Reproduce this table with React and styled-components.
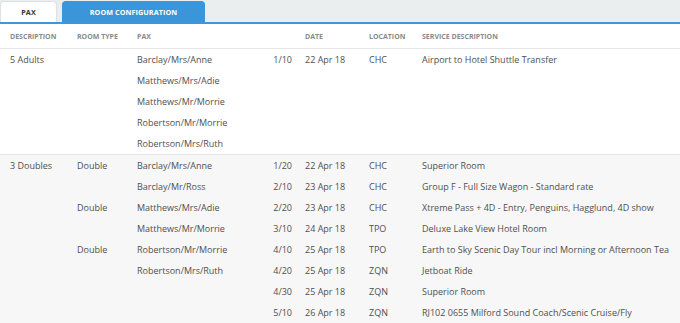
import React from "react";
import styled, { createGlobalStyle } from "styled-components";

const groups = [
  {
    rows: [
      { desc: "5 Adults", pax: "Barclay/Mrs/Anne", num: "1/10", date: "22 Apr 18", loc: "CHC", service: "Airport to Hotel Shuttle Transfer" },
      { pax: "Matthews/Mrs/Adie" },
      { pax: "Matthews/Mr/Morrie" },
      { pax: "Robertson/Mr/Morrie" },
      { pax: "Robertson/Mrs/Ruth" },
    ],
  },
  {
    shaded: true,
    rows: [
      { desc: "3 Doubles", type: "Double", pax: "Barclay/Mrs/Anne", num: "1/20", date: "22 Apr 18", loc: "CHC", service: "Superior Room" },
      { pax: "Barclay/Mr/Ross", num: "2/10", date: "23 Apr 18", loc: "CHC", service: "Group F - Full Size Wagon - Standard rate" },
      { type: "Double", pax: "Matthews/Mrs/Adie", num: "2/20", date: "23 Apr 18", loc: "CHC", service: "Xtreme Pass + 4D - Entry, Penguins, Hagglund, 4D show" },
      { pax: "Matthews/Mr/Morrie", num: "3/10", date: "24 Apr 18", loc: "TPO", service: "Deluxe Lake View Hotel Room" },
      { type: "Double", pax: "Robertson/Mr/Morrie", num: "4/10", date: "25 Apr 18", loc: "TPO", service: "Earth to Sky Scenic Day Tour incl Morning or Afternoon Tea" },
      { pax: "Robertson/Mrs/Ruth", num: "4/20", date: "25 Apr 18", loc: "ZQN", service: "Jetboat Ride" },
      { num: "4/30", date: "25 Apr 18", loc: "ZQN", service: "Superior Room" },
      { num: "5/10", date: "26 Apr 18", loc: "ZQN", service: "RJ102 0655 Milford Sound Coach/Scenic Cruise/Fly" },
    ],
  },
];

function App() {
  return (
    <>
      <GlobalStyle />
      <Page>
        <TabBar>
          <Tab>PAX</Tab>
          <Tab active>ROOM CONFIGURATION</Tab>
        </TabBar>
        <HeaderRow>
          <span>DESCRIPTION</span>
          <span>ROOM TYPE</span>
          <span>PAX</span>
          <span />
          <DateCell>DATE</DateCell>
          <span>LOCATION</span>
          <span>SERVICE DESCRIPTION</span>
        </HeaderRow>
        {groups.map((group, gi) => (
          <Group key={gi} shaded={group.shaded}>
            {group.rows.map((row, ri) => (
              <Row key={ri}>
                <span>{row.desc}</span>
                <span>{row.type}</span>
                <span>{row.pax}</span>
                <NumCell>{row.num}</NumCell>
                <DateCell>{row.date}</DateCell>
                <span>{row.loc}</span>
                <span>{row.service}</span>
              </Row>
            ))}
          </Group>
        ))}
      </Page>
    </>
  );
}

const GlobalStyle = createGlobalStyle`
  body {
    margin: 0;
    background: #f0f1f2;
    font-family: "Open Sans", "Noto Sans", sans-serif;
  }
`;

const Page = styled.div`
  width: 680px;
  height: 323px;
  overflow: hidden;
  background: #f0f1f2;
`;

const TabBar = styled.div`
  display: flex;
  align-items: flex-end;
  gap: 5px;
  height: 21px;
  padding-top: 1px;
  background: #ebeeef;
  border-bottom: 2px solid #3d97da;
`;

const Tab = styled.div`
  height: 100%;
  box-sizing: border-box;
  display: flex;
  align-items: center;
  justify-content: center;
  width: ${(p) => (p.active ? "143px" : "57px")};
  border-radius: 4px 4px 0 0;
  font-size: 7.2px;
  font-weight: 700;
  letter-spacing: 0.1px;
  color: ${(p) => (p.active ? "#ffffff" : "#333")};
  background: ${(p) => (p.active ? "#3a95d9" : "#ffffff")};
  border: 1px solid ${(p) => (p.active ? "#3a95d9" : "#dde1e3")};
  border-bottom: none;
`;

const columns = `
  display: grid;
  grid-template-columns: 67px 60px 120px 35px 77px 53px 1fr;
  align-items: center;
  padding-left: 10px;
  white-space: nowrap;
`;

const HeaderRow = styled.div`
  ${columns}
  height: 24px;
  background: #ffffff;
  border-bottom: 1px solid #e6e8ea;
  font-size: 7px;
  font-weight: 700;
  color: #8a8a8a;
`;

const Group = styled.div`
  background: ${(p) => (p.shaded ? "#f7f7f7" : "#ffffff")};
  border-bottom: 1px solid #e3e5e7;
`;

const Row = styled.div`
  ${columns}
  height: 21px;
  font-size: 9px;
  color: #4f4f4f;
`;

const NumCell = styled.span`
  text-align: right;
`;

const DateCell = styled.span`
  padding-left: 13px;
`;

export default App;
